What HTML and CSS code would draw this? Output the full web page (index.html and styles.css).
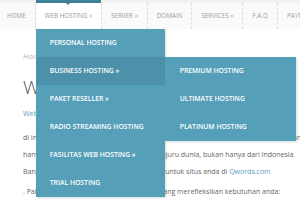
FILE: index.html
```
<!DOCTYPE html>
<html>
<head>
  <meta charset="UTF-8">
  <link rel="stylesheet" href="styles.css">
</head>
<body>
  <div class="nav">
    <ul class="menu">
      <li><a href="#">HOME</a></li>
      <li class="active">
        <a href="#">WEB HOSTING &raquo;</a>
        <ul class="dropdown">
          <li><a href="#">PERSONAL HOSTING</a></li>
          <li class="open">
            <a href="#">BUSINESS HOSTING &raquo;</a>
            <ul class="submenu">
              <li><a href="#">PREMIUM HOSTING</a></li>
              <li><a href="#">ULTIMATE HOSTING</a></li>
              <li><a href="#">PLATINUM HOSTING</a></li>
            </ul>
          </li>
          <li><a href="#">PAKET RESELLER &raquo;</a></li>
          <li><a href="#">RADIO STREAMING HOSTING</a></li>
          <li><a href="#">FASILITAS WEB HOSTING &raquo;</a></li>
          <li><a href="#">TRIAL HOSTING</a></li>
        </ul>
      </li>
      <li><a href="#">SERVER &raquo;</a></li>
      <li><a href="#">DOMAIN</a></li>
      <li><a href="#">SERVICES &raquo;</a></li>
      <li><a href="#">F.A.Q</a></li>
      <li><a href="#">PAYMENT</a></li>
    </ul>
  </div>

  <div class="content">
    <div class="breadcrumb">Home</div>
    <h1>Web Hosting</h1>
    <p class="intro"><a href="#">Web hosting</a> terbaik</p>
    <p>
      <span class="line">di Indonesia dengan layanan yang cepat, stabil dan aman untuk semua kebutuhan anda</span>
      <span class="line">hanya melayani lokal, kita layani semua penjuru dunia, bukan hanya dari Indonesia</span>
      <span class="line">Bangun website impian dengan server web untuk situs anda di <a href="#">Qwords.com</a></span>
    </p>
    <p>
      <span class="line">. Paket hosting disediakan dengan pilihan yang merefleksikan kebutuhan anda:</span>
    </p>
  </div>
</body>
</html>
```

FILE: styles.css
```
body {
  margin: 0;
  width: 300px;
  height: 207px;
  overflow: hidden;
  background: #fff;
  font-family: "Open Sans", "DejaVu Sans", sans-serif;
}

ul {
  list-style: none;
  margin: 0;
  padding: 0;
}

a {
  text-decoration: none;
}

/* menu utama */
.nav {
  background: #fafafa;
  border-top: 3px solid #f1f1f1;
  height: 26px;
  position: relative;
  z-index: 10;
}

.menu {
  display: flex;
  margin-left: -2px;
  white-space: nowrap;
}

.menu > li {
  position: relative;
  border-right: 1px dashed #dcdcdc;
}

.menu > li > a {
  display: block;
  height: 26px;
  line-height: 26px;
  padding: 0 9px;
  font-size: 6.3px;
  color: #9a9a9a;
}

.menu > li.active {
  background: #fff;
}

.menu > li.active::before {
  content: '';
  position: absolute;
  top: -3px;
  left: 0;
  right: 0;
  height: 3px;
  background: #3f8196;
}

.menu > li.active::after {
  content: '';
  position: absolute;
  top: 0;
  left: 50%;
  margin-left: -2px;
  border: 2px solid transparent;
  border-top-color: #3f8196;
}

/* dropdown */
.dropdown,
.submenu {
  position: absolute;
  background: #569fb9;
  box-shadow: 1px 1px 2px rgba(0, 0, 0, 0.15);
}

.dropdown {
  top: 100%;
  left: 0;
  width: 129px;
}

.dropdown li {
  position: relative;
}

.dropdown a {
  display: block;
  height: 28px;
  line-height: 28px;
  padding-left: 14px;
  font-size: 6.8px;
  font-weight: 600;
  color: #fff;
}

.dropdown li.open > a {
  background: #4c91a9;
}

.submenu {
  top: 0;
  left: 100%;
  width: 131px;
}

.submenu a {
  padding-left: 15px;
}

/* isi halaman */
.content {
  padding-left: 23px;
  color: #666;
  font-size: 7px;
  white-space: nowrap;
  overflow: hidden;
}

.content a {
  color: #5a9fbc;
}

.breadcrumb {
  margin-top: 21px;
  font-style: italic;
  font-size: 8px;
  color: #bbb;
}

.content h1 {
  margin: 14px 0 0;
  font-size: 19px;
  font-weight: 300;
  line-height: 24px;
  color: #555;
}

.content p {
  margin: 0;
  line-height: 17px;
}

.content p.intro {
  margin: 6px 0 7px;
}

.content p + p {
  margin-top: 3px;
}

.line {
  display: block;
}
```
